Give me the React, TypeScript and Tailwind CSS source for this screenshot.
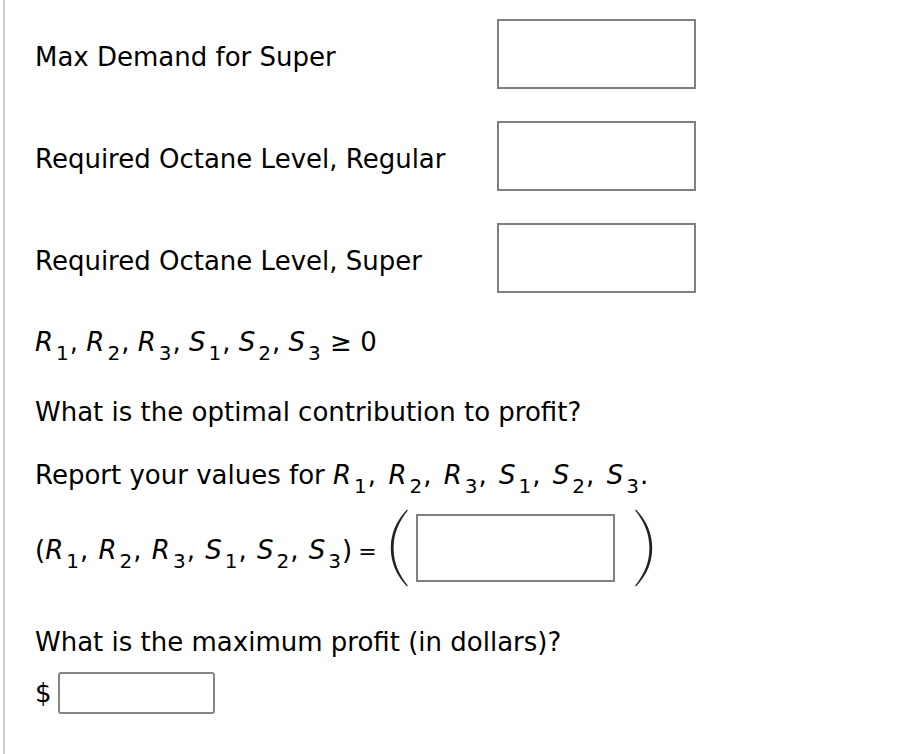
import React from "react";

const Sub = ({ v, n }: { v: string; n: string }) => (
  <>
    <i>{v}</i>
    <span className="relative top-[9px] text-[20px] not-italic ml-[3px] mr-[1px]">{n}</span>
  </>
);

const Vars = ({ gap }: { gap?: string }) => {
  const items: [string, string][] = [
    ["R", "1"],
    ["R", "2"],
    ["R", "3"],
    ["S", "1"],
    ["S", "2"],
    ["S", "3"],
  ];
  return (
    <>
      {items.map(([v, n], i) => (
        <React.Fragment key={i}>
          <Sub v={v} n={n} />
          {i < items.length - 1 && (
            <>
              <span className={gap ?? ""}>,</span>{" "}
            </>
          )}
        </React.Fragment>
      ))}
    </>
  );
};

const Paren = ({ flip }: { flip?: boolean }) => (
  <svg width="18" height="78" viewBox="0 0 18 78" className={flip ? "-scale-x-100" : ""}>
    <path
      d="M17 0.5 C6 12 0.8 25 0.8 39 C0.8 53 6 66 17 77.5 L17.8 76.6 C8.5 65 3.6 53 3.6 39 C3.6 25 8.5 13 17.8 1.4 Z"
      fill="#222"
    />
  </svg>
);

export default function App() {
  return (
    <div
      className="w-[914px] h-[754px] bg-white text-black overflow-hidden"
      style={{ fontFamily: '"DejaVu Sans", Verdana, sans-serif' }}
    >
      <div className="ml-[3px] h-full border-l-2 border-[#cccccc] pl-[30px] text-[26px] leading-none">
        <div className="pt-[19px] flex flex-col gap-[32px]">
          {["Max Demand for Super", "Required Octane Level, Regular", "Required Octane Level, Super"].map((t) => (
            <div key={t} className="grid grid-cols-[462px_199px] items-center">
              <span className="pt-[6px]">{t}</span>
              <div className="h-[70px] border-2 border-[#808080] bg-white" />
            </div>
          ))}
        </div>
        <div className="mt-[36px]">
          <Vars /> ≥ 0
        </div>
        <div className="mt-[44px]">What is the optimal contribution to profit?</div>
        <div className="mt-[37px] whitespace-nowrap">
          Report your values for <Vars gap="mr-[4px]" />.
        </div>
        <div className="mt-[21px] flex items-center">
          <span className="w-[355px] shrink-0 pt-[4px] whitespace-nowrap">
            (<Vars gap="mr-[2px]" />)<span className="ml-[6px] text-[22px]">=</span>
          </span>
          <span className="flex items-center">
            <Paren />
            <span className="ml-[8px] w-[199px] h-[68px] border-2 border-[#808080]" />
            <span className="ml-[20px]">
              <Paren flip />
            </span>
          </span>
        </div>
        <div className="mt-[42px]">What is the maximum profit (in dollars)?</div>
        <div className="mt-[17px] flex items-center">
          <span>$</span>
          <span className="ml-[6px] w-[157px] h-[42px] border-2 border-[#858585] rounded-[3px]" />
        </div>
      </div>
    </div>
  );
}
